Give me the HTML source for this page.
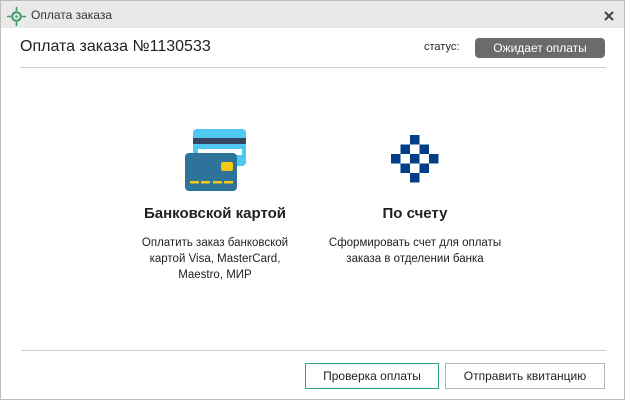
<!DOCTYPE html>
<html><head><meta charset="utf-8"><style>
*{margin:0;padding:0;box-sizing:border-box}
body{width:625px;height:400px;overflow:hidden;background:#fff;font-family:"Liberation Sans",sans-serif;color:#222;position:relative}
.win{position:absolute;left:0;top:0;width:625px;height:400px;border:1px solid #bdbdbd}
.tb{position:absolute;left:0;top:0;width:623px;height:27px;background:#e9e9e9}
.abs{position:absolute;white-space:nowrap}
.c{text-align:center}
.btn{position:absolute;top:362px;height:26px;border:1px solid #b5b5b5;font-size:12px;text-align:center;line-height:24px;background:#fff}
</style></head><body>
<div class="win">
<div class="tb"></div>
<svg class="abs" style="left:6px;top:6px" width="19" height="19" viewBox="0 0 19 19"><circle cx="9.5" cy="9.5" r="4.3" fill="none" stroke="#3a9a66" stroke-width="2"/><circle cx="9.5" cy="9.5" r="1.3" fill="#3a9a66"/><path d="M9.5 0v4M9.5 15v4M0 9.5h4M15 9.5h4" stroke="#3a9a66" stroke-width="1.6"/></svg>
<div class="abs" style="left:30px;top:7px;font-size:12px;color:#333">Оплата заказа</div>
<svg class="abs" style="left:603px;top:10px" width="10" height="10" viewBox="0 0 10 10"><path d="M1 1L9 9M9 1L1 9" stroke="#444" stroke-width="2"/></svg>
<div class="abs" style="left:19px;top:37px;font-size:16px;color:#222">Оплата заказа №1130533</div>
<div class="abs" style="left:423px;top:40px;font-size:11px;color:#222">статус:</div>
<div class="abs c" style="left:474px;top:37px;width:130px;height:20px;background:#6b6b6b;border-radius:4px;color:#fff;font-size:12px;line-height:20px">Ожидает оплаты</div>
<div class="abs" style="left:19px;top:66px;width:586px;height:1px;background:#cfcfcf"></div>

<svg class="abs" style="left:0;top:0" width="625" height="200">
<rect x="192" y="128" width="53" height="37" rx="4" fill="#4fc8f2"/>
<rect x="192" y="137" width="53" height="6" fill="#354564"/>
<rect x="197" y="148" width="44" height="6" fill="#fff"/>
<rect x="184" y="152" width="52" height="38" rx="4" fill="#2e7399"/>
<rect x="220" y="161" width="12" height="9" rx="2" fill="#f6c811"/>
<g fill="#f6c811"><rect x="189" y="180" width="9" height="2.5"/><rect x="200" y="180" width="9" height="2.5"/><rect x="212" y="180" width="9" height="2.5"/><rect x="223" y="180" width="9" height="2.5"/></g>
<g fill="#003f87"><rect x="409" y="134" width="9.5" height="9.5"/><rect x="399.5" y="143.5" width="9.5" height="9.5"/><rect x="418.5" y="143.5" width="9.5" height="9.5"/><rect x="390" y="153" width="9.5" height="9.5"/><rect x="409" y="153" width="9.5" height="9.5"/><rect x="428" y="153" width="9.5" height="9.5"/><rect x="399.5" y="162.5" width="9.5" height="9.5"/><rect x="418.5" y="162.5" width="9.5" height="9.5"/><rect x="409" y="172" width="9.5" height="9.5"/></g>
</svg>

<div class="abs c" style="left:114px;top:204px;width:200px;font-size:15px;font-weight:bold">Банковской картой</div>
<div class="abs c" style="left:114px;top:234px;width:200px;font-size:11.5px;line-height:16px;white-space:normal">Оплатить заказ банковской<br>картой Visa, MasterCard,<br>Maestro, МИР</div>
<div class="abs c" style="left:314px;top:204px;width:200px;font-size:15px;font-weight:bold">По счету</div>
<div class="abs c" style="left:304px;top:234px;width:220px;font-size:11.5px;line-height:16px;white-space:normal">Сформировать счет для оплаты<br>заказа в отделении банка</div>

<div class="abs" style="left:20px;top:349px;width:585px;height:1px;background:#cfcfcf"></div>
<div class="btn" style="left:304px;width:134px;border-color:#2ea56a">Проверка оплаты</div>
<div class="btn" style="left:444px;width:160px">Отправить квитанцию</div>
</div>
</body></html>
